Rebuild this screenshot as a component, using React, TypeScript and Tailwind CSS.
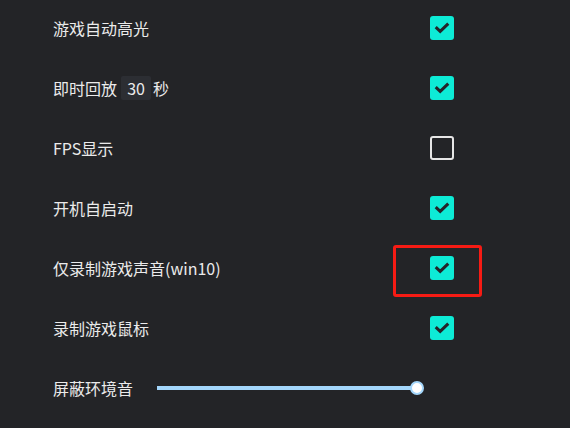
import React from "react";

const font = { fontFamily: '"Noto Sans CJK SC", "Noto Sans", sans-serif' };

function Check({ checked, highlight }: { checked: boolean; highlight?: boolean }) {
  return (
    <div className="relative w-6 h-6">
      {checked ? (
        <div className="w-6 h-6 rounded-[3px] bg-[#0debd6] flex items-center justify-center">
          <svg width="24" height="24" viewBox="0 0 24 24">
            <path d="M6.8 12.2 L10.2 15.4 L17.2 8.6" fill="none" stroke="#23252a" strokeWidth="3" strokeLinecap="square" strokeLinejoin="miter" />
          </svg>
        </div>
      ) : (
        <div className="w-6 h-6 rounded-[3px] border-2 border-[#e6e6e6]" />
      )}
      {highlight && (
        <div className="absolute -left-[37px] -top-[11px] w-[89px] h-[52px] border-[3px] border-[#f61b14] rounded-[3px]" />
      )}
    </div>
  );
}

function Row({ label, checked, highlight }: { label: React.ReactNode; checked: boolean; highlight?: boolean }) {
  return (
    <div className="flex items-center h-6">
      <div className="w-[377px] flex items-center text-[16px] text-[#ebebeb]">{label}</div>
      <Check checked={checked} highlight={highlight} />
    </div>
  );
}

export default function App() {
  return (
    <div className="w-[570px] h-[428px] bg-[#232427] overflow-hidden pl-[53px] pt-4 flex flex-col gap-9" style={font}>
      <Row label="游戏自动高光" checked />
      <Row
        label={
          <>
            <span>即时回放</span>
            <span className="ml-1 w-[30px] h-6 rounded-[2px] bg-[#2c2e33] flex items-center justify-center text-[16px]">30</span>
            <span className="ml-[2px]">秒</span>
          </>
        }
        checked
      />
      <Row label="FPS显示" checked={false} />
      <Row label="开机自启动" checked />
      <Row label="仅录制游戏声音(win10)" checked highlight />
      <Row label="录制游戏鼠标" checked />
      <div className="flex items-center h-6">
        <div className="w-[104px] text-[16px] text-[#ebebeb]">屏蔽环境音</div>
        <div className="relative w-[267px] h-6 flex items-center">
          <div className="w-[260px] h-1 bg-[#a3d6fb]" />
          <div className="absolute left-[253px] top-[5px] w-[14px] h-[14px] rounded-full bg-white border-2 border-[#a3d6fb]" />
        </div>
      </div>
    </div>
  );
}
